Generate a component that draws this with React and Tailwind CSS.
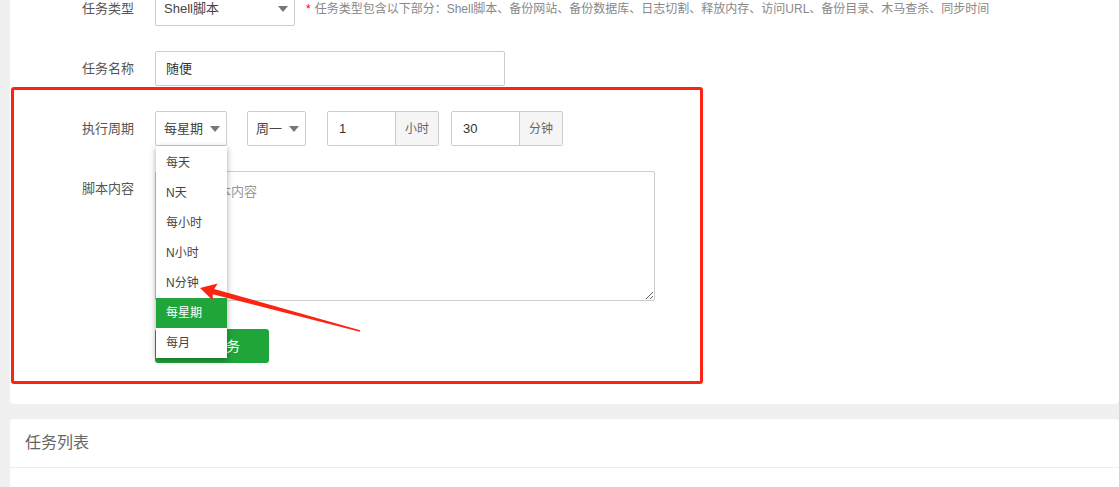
import React from 'react';

const cycleOptions = ['每天', 'N天', '每小时', 'N小时', 'N分钟', '每星期', '每月'];

function Caret() {
  return <span className="w-0 h-0 border-x-[5px] border-x-transparent border-t-[6px] border-t-[#777]" />;
}

function FakeSelect({ value, width, children }) {
  return (
    <div className={`relative h-[35px] ${width} flex items-center justify-between pl-[8px] pr-[6px] border border-[#ccc] rounded-[2px] bg-white text-[13px] text-[#444]`}>
      <span>{value}</span>
      <Caret />
      {children}
    </div>
  );
}

function InputGroup({ value, unit }) {
  return (
    <div className="h-[35px] w-[112px] flex border border-[#ccc] rounded-[2px] overflow-hidden text-[13px]">
      <div className="flex-1 flex items-center pl-[11px] text-[#333] bg-white">{value}</div>
      <div className="w-[43px] flex items-center justify-center border-l border-[#ccc] bg-[#f5f5f5] text-[12px] text-[#666]">{unit}</div>
    </div>
  );
}

function Label({ children, top }) {
  return (
    <div className={`w-[125px] shrink-0 pr-[1px] text-right text-[13px] text-[#555] ${top ? 'leading-[35px] self-start' : ''}`}>
      {children}
    </div>
  );
}

export default function App() {
  return (
    <div className="relative w-[1119px] h-[487px] overflow-hidden bg-[#f0f0f0] pl-[10px] flex flex-col font-['Liberation_Sans','Noto_Sans_CJK_SC',sans-serif]">
      {/* Form card */}
      <div className="bg-white rounded-b-[4px] flex flex-col pb-[41px]">
        <div className="-mt-[9px] h-[35px] flex items-center">
          <Label>任务类型</Label>
          <div className="ml-[20px]">
            <FakeSelect value="Shell脚本" width="w-[140px]" />
          </div>
          <span className="ml-[11px] text-[12px] text-[#f00]">*</span>
          <span className="ml-[4px] text-[12px] text-[#888]">
            任务类型包含以下部分：Shell脚本、备份网站、备份数据库、日志切割、释放内存、访问URL、备份目录、木马查杀、同步时间
          </span>
        </div>

        <div className="mt-[25px] h-[35px] flex items-center">
          <Label>任务名称</Label>
          <div className="ml-[20px] w-[350px] h-[35px] flex items-center pl-[10px] border border-[#ccc] rounded-[2px] text-[13px] text-[#333]">
            随便
          </div>
        </div>

        <div className="mt-[25px] h-[35px] flex items-center">
          <Label>执行周期</Label>
          <div className="ml-[20px] z-20">
            <FakeSelect value="每星期" width="w-[72px]">
              <div className="absolute left-0 top-[34px] w-[71px] pt-[2px] bg-white shadow-[0_2px_6px_rgba(0,0,0,0.35)]">
                {cycleOptions.map((opt) => (
                  <div
                    key={opt}
                    className={`h-[30px] flex items-center pl-[10px] text-[12px] ${opt === '每星期' ? 'bg-[#20a53a] text-white' : 'text-[#444]'}`}
                  >
                    {opt}
                  </div>
                ))}
              </div>
            </FakeSelect>
          </div>
          <div className="ml-[20px]">
            <FakeSelect value="周一" width="w-[59px]" />
          </div>
          <div className="ml-[21px]">
            <InputGroup value="1" unit="小时" />
          </div>
          <div className="ml-[12px]">
            <InputGroup value="30" unit="分钟" />
          </div>
        </div>

        <div className="mt-[25px] flex">
          <Label top>脚本内容</Label>
          <textarea
            readOnly
            placeholder="请输入脚本内容"
            className="ml-[20px] w-[500px] h-[130px] px-[10px] py-[9px] leading-[22px] border border-[#ccc] rounded-[2px] text-[13px] placeholder:text-[#999] outline-none"
          />
        </div>

        <div className="mt-[28px] pl-[145px]">
          <button className="w-[114px] h-[34px] rounded-[3px] bg-[#20a53a] text-white text-[14px]">添加任务</button>
        </div>
      </div>

      {/* List card */}
      <div className="mt-[15px] flex-1 bg-white rounded-t-[4px]">
        <div className="h-[49px] flex items-center pl-[15px] border-b border-[#ececec] text-[16px] text-[#666]">任务列表</div>
      </div>

      {/* Annotation overlay */}
      <div className="absolute left-[11px] top-[87px] w-[692px] h-[297px] border-[3px] border-[#fe2211] rounded-[3px] pointer-events-none z-30" />
      <svg className="absolute left-0 top-0 z-30 pointer-events-none" width="1119" height="487">
        <polygon
          points="200,288 217.7,283.6 214.2,288.9 360.2,330.3 359.8,331.7 212.8,294.3 212.8,300.6"
          fill="#fe2211"
        />
      </svg>
    </div>
  );
}
